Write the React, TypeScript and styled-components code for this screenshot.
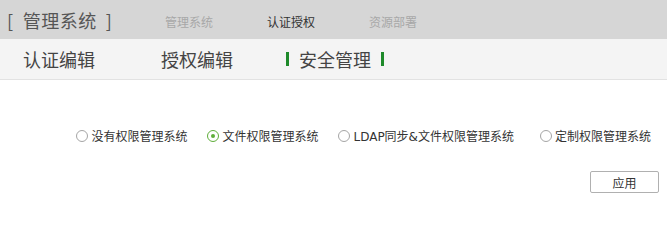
import styled, { createGlobalStyle } from 'styled-components'

const GlobalStyle = createGlobalStyle`
  body {
    margin: 0;
    background: #fff;
    font-family: "Noto Sans CJK SC", "Liberation Sans", sans-serif;
    color: #333;
  }
`

const navItems = [
  { label: '管理系统', active: false },
  { label: '认证授权', active: true },
  { label: '资源部署', active: false },
]

const tabs = [
  { label: '认证编辑', active: false },
  { label: '授权编辑', active: false },
  { label: '安全管理', active: true },
]

const options = [
  { label: '没有权限管理系统', checked: false, space: 20 },
  { label: '文件权限管理系统', checked: true, space: 20 },
  { label: 'LDAP同步&文件权限管理系统', checked: false, space: 26 },
  { label: '定制权限管理系统', checked: false, space: 0 },
]

export default function App() {
  return (
    <>
      <GlobalStyle />
      <TopBar>
        <Brand>[&nbsp;&nbsp;管理系统&nbsp;&nbsp;]</Brand>
        <Nav>
          {navItems.map((n) => (
            <NavItem key={n.label} $active={n.active}>
              {n.label}
            </NavItem>
          ))}
        </Nav>
      </TopBar>
      <TabBar>
        {tabs.map((t) => (
          <Tab key={t.label} $active={t.active}>
            {t.label}
          </Tab>
        ))}
      </TabBar>
      <Content>
        <RadioRow>
          {options.map((o) => (
            <RadioLabel key={o.label} $space={o.space}>
              <RadioCircle $checked={o.checked} />
              {o.label}
            </RadioLabel>
          ))}
        </RadioRow>
        <Actions>
          <ApplyButton>应用</ApplyButton>
        </Actions>
      </Content>
    </>
  )
}

const TopBar = styled.header`
  display: flex;
  align-items: center;
  height: 39px;
  padding-left: 7px;
  background: #d6d6d6;
`

const Brand = styled.div`
  font-size: 18px;
  color: #555;
  letter-spacing: 0.5px;
  width: 158px;
  white-space: nowrap;
`

const Nav = styled.nav`
  display: flex;
  gap: 54px;
  padding-top: 4px;
`

const NavItem = styled.span<{ $active: boolean }>`
  font-size: 12px;
  color: ${({ $active }) => ($active ? '#333' : '#a8a8a8')};
`

const TabBar = styled.div`
  display: flex;
  align-items: center;
  height: 40px;
  padding-left: 23px;
  gap: 66px;
  background: #f4f4f4;
  border-bottom: 1px solid #e2e2e2;
`

const Tab = styled.div<{ $active: boolean }>`
  position: relative;
  font-size: 18px;
  color: #444;

  ${({ $active }) =>
    $active &&
    `
    &::before,
    &::after {
      content: "";
      position: absolute;
      top: 50%;
      width: 3px;
      height: 14px;
      margin-top: -7px;
      background: #1e8a2a;
    }
    &::before { left: -13px; }
    &::after { right: -13px; }
  `}
`

const Content = styled.main`
  padding: 0 8px 0 0;
`

const RadioRow = styled.div`
  display: flex;
  justify-content: flex-end;
  align-items: center;
  padding: 47px 8px 0 0;
  height: 17px;
`

const RadioLabel = styled.label<{ $space: number }>`
  display: flex;
  align-items: center;
  gap: 3px;
  margin-right: ${({ $space }) => $space}px;
  font-family: "DejaVu Sans", "Noto Sans CJK SC", sans-serif;
  font-size: 12px;
  color: #333;
  white-space: nowrap;
`

const RadioCircle = styled.span<{ $checked: boolean }>`
  box-sizing: border-box;
  width: 12px;
  height: 12px;
  border-radius: 50%;
  border: 1px solid ${({ $checked }) => ($checked ? '#5fae3a' : '#a5a5a5')};
  background: #fff;
  display: flex;
  align-items: center;
  justify-content: center;

  &::after {
    content: "";
    width: 4px;
    height: 4px;
    border-radius: 50%;
    background: ${({ $checked }) => ($checked ? '#5fae3a' : 'transparent')};
  }
`

const Actions = styled.div`
  display: flex;
  justify-content: flex-end;
  padding-top: 27px;
`

const ApplyButton = styled.button`
  box-sizing: border-box;
  width: 69px;
  height: 22px;
  font-family: "Noto Sans CJK SC", "Liberation Sans", sans-serif;
  font-size: 12px;
  color: #333;
  background: #fff;
  border: 1px solid #b0b0b0;
  border-radius: 2px;
  padding: 0;
`
